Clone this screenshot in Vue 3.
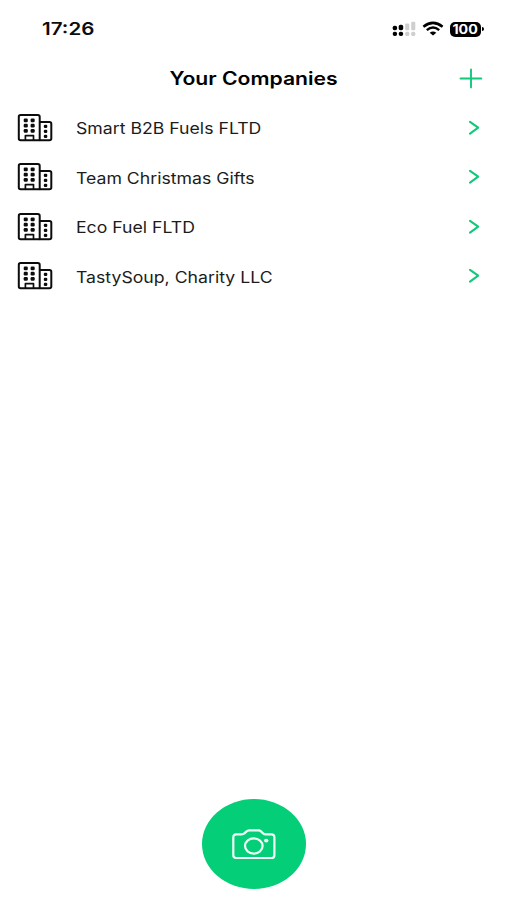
<template>
  <div class="screen">
    <header class="status-bar">
      <span class="time">17:26</span>
      <div class="status-icons">
        <svg class="signal" width="24" height="16" viewBox="0 0 24 16">
          <g fill="#000">
            <rect x="0.7" y="4.7" width="4.4" height="4.6" rx="1.8" />
            <rect x="6.7" y="3.7" width="4.5" height="5.6" rx="1.8" />
            <rect x="0.7" y="10.7" width="4.4" height="4.4" rx="2" />
            <rect x="6.7" y="10.7" width="4.5" height="4.4" rx="2" />
          </g>
          <g fill="#cfcfcf">
            <rect x="13.2" y="2.4" width="4.1" height="6.9" rx="1.2" />
            <rect x="19.2" y="0.7" width="4.1" height="8.6" rx="1.2" />
            <rect x="13.2" y="10.7" width="4.1" height="4.4" rx="1.6" />
            <rect x="19.2" y="10.7" width="4.1" height="4.4" rx="1.6" />
          </g>
        </svg>
        <svg class="wifi" width="22" height="16" viewBox="0 0 22 16" fill="none" stroke="#000">
          <path d="M1.4 5.7Q11 -2 20.6 5.7" stroke-width="2.6" />
          <path d="M4.8 9.1Q11 4 17.2 9.1" stroke-width="2.5" />
          <path d="M7.7 11.7Q11 9.2 14.3 11.7L11 14.5Z" fill="#000" stroke="none" />
        </svg>
        <div class="battery"><span>100</span></div>
        <div class="battery-cap"></div>
      </div>
    </header>

    <div class="title-bar">
      <h1 class="title"><span>Your Companies</span></h1>
      <button class="add-btn" aria-label="Add company">
        <svg width="24" height="22" viewBox="0 0 24 22" fill="none" stroke="#12c87b" stroke-width="1.9" stroke-linecap="round">
          <path d="M1.5 11.5H22.3M12 2.4V20.4" />
        </svg>
      </button>
    </div>

    <ul class="company-list">
      <li v-for="company in companies" :key="company" class="company-row">
        <svg class="building" width="36" height="30" viewBox="0 0 36 30" fill="none" stroke="#0c0c0c" stroke-width="2" stroke-linejoin="round">
          <path d="M3.6 2.1H20.8Q22.7 2.1 22.7 3.9V27.3H3.6Q1.8 27.3 1.8 25.6V3.9Q1.8 2.1 3.6 2.1Z" />
          <path d="M22.7 8.9H32.4Q34.3 8.9 34.3 10.7V25.6Q34.3 27.3 32.4 27.3H22.7" />
          <path d="M8.4 27V22.6H16.5V27" stroke-width="1.7" />
          <g fill="#0c0c0c" stroke="none">
            <rect v-for="w in windows" :key="w.id" :x="w.x" :y="w.y" :width="w.w" :height="w.h" rx="1.2" />
          </g>
        </svg>
        <span class="company-name">{{ company }}</span>
        <svg class="chevron" width="12" height="16" viewBox="0 0 12 16" fill="none" stroke="#12c87b" stroke-width="2.1" stroke-linecap="round" stroke-linejoin="round">
          <path d="M2 1.8L10.2 7.7L2 13.6" />
        </svg>
      </li>
    </ul>

    <footer class="footer">
      <button class="camera-btn" aria-label="Take a photo">
        <svg width="44" height="32" viewBox="0 0 44 32" fill="none" stroke="#effff7" stroke-width="2.2">
          <path d="M4.2 6.4H9.5Q11.5 6.4 13 4.9L14.3 3.6Q15.5 2.4 17.3 2.4H26.3Q28 2.4 29.3 3.6L30.6 4.9Q32 6.4 34.2 6.4H39.4Q42.4 6.4 42.4 9.2V27.2Q42.4 30 39.4 30H4.2Q1.3 30 1.3 27.2V9.2Q1.3 6.4 4.2 6.4Z" />
          <ellipse cx="21.8" cy="18" rx="8.8" ry="7.6" />
          <ellipse cx="34.2" cy="12.6" rx="2.2" ry="1.9" fill="#effff7" stroke="none" />
        </svg>
      </button>
    </footer>
  </div>
</template>

<script setup>
const companies = [
  'Smart B2B Fuels FLTD',
  'Team Christmas Gifts',
  'Eco Fuel FLTD',
  'TastySoup, Charity LLC'
]

const windows = []
for (let row = 0; row < 3; row++) {
  windows.push({ id: `a${row}`, x: 6.7, y: 5.6 + row * 5.2, w: 4.1, h: 3.7 })
  windows.push({ id: `b${row}`, x: 13.6, y: 5.6 + row * 5.2, w: 4.1, h: 3.7 })
  windows.push({ id: `c${row}`, x: 26.8, y: 11.8 + row * 5, w: 3.5, h: 3.1 })
}
</script>

<style>
body {
  margin: 0;
  background: #fff;
}
</style>

<style scoped>
.screen {
  display: flex;
  flex-direction: column;
  width: 507px;
  height: 900px;
  box-sizing: border-box;
  overflow: hidden;
  background: #fff;
  color: #000;
  font-family: Inter, "Liberation Sans", sans-serif;
}
.status-bar {
  display: flex;
  align-items: center;
  justify-content: space-between;
  height: 58px;
  padding: 0 23px 0 42px;
  box-sizing: border-box;
}
.time {
  color: #0c0c0c;
  font-size: 17px;
  font-weight: 600;
  transform: scaleX(1.21);
  transform-origin: left center;
}
.status-icons {
  display: flex;
  align-items: center;
}
.wifi {
  margin-left: 6px;
}
.battery {
  display: flex;
  align-items: center;
  justify-content: center;
  width: 31px;
  height: 15px;
  margin-left: 6px;
  border-radius: 5px;
  background: #000;
  color: #fff;
  font-size: 12.5px;
  font-weight: 700;
  line-height: 15px;
}
.battery span {
  transform: scaleX(1.14);
}
.battery-cap {
  width: 2px;
  height: 4px;
  margin-left: 1px;
  border-radius: 0 2px 2px 0;
  background: #000;
}
.title-bar {
  display: grid;
  grid-template-columns: 48px 1fr 48px;
  align-items: center;
  height: 40px;
}
.title {
  grid-column: 2;
  margin: 2px 0 0;
  font-size: 18px;
  font-weight: 600;
  line-height: 24px;
  text-align: center;
}
.title span {
  display: inline-block;
  transform: scaleX(1.175);
}
.add-btn {
  display: flex;
  padding: 0;
  border: none;
  background: none;
  cursor: pointer;
}
.company-list {
  margin: 5px 0 0;
  padding: 0;
  list-style: none;
}
.company-row {
  display: flex;
  align-items: center;
  height: 49.5px;
  padding: 0 27px 0 17px;
}
.company-name {
  flex: 1;
  margin: 3px 0 0 23px;
  color: #1c1c1c;
  font-size: 15.5px;
  line-height: 20px;
  white-space: nowrap;
  transform: scaleX(1.14);
  transform-origin: left center;
}
.footer {
  display: flex;
  justify-content: center;
  margin-top: auto;
  padding-bottom: 11px;
}
.camera-btn {
  display: flex;
  align-items: center;
  justify-content: center;
  width: 104px;
  height: 90px;
  padding: 0;
  border: none;
  border-radius: 50%;
  background: #04ce78;
  cursor: pointer;
}
</style>
